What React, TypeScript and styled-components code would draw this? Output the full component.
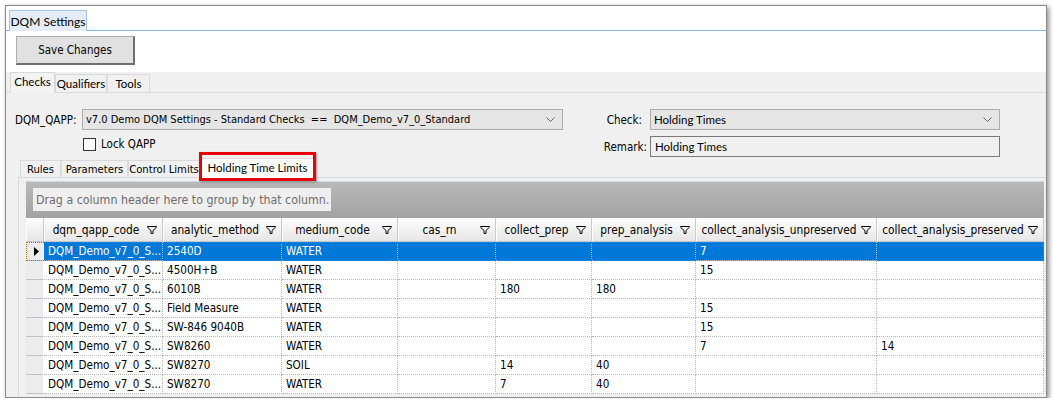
import React from "react";
import styled, { createGlobalStyle } from "styled-components";

const tahoma = `"DejaVu Sans Condensed", "DejaVu Sans", sans-serif`;
const segoe = `Lato, "Liberation Sans", sans-serif`;

const columns = [
  { key: "dqm_qapp_code", width: 119 },
  { key: "analytic_method", width: 119 },
  { key: "medium_code", width: 116 },
  { key: "cas_rn", width: 98 },
  { key: "collect_prep", width: 96 },
  { key: "prep_analysis", width: 104 },
  { key: "collect_analysis_unpreserved", width: 181 },
  { key: "collect_analysis_preserved", width: 167 },
];

const rows = [
  ["DQM_Demo_v7_0_S...", "2540D", "WATER", "", "", "", "7", ""],
  ["DQM_Demo_v7_0_S...", "4500H+B", "WATER", "", "", "", "15", ""],
  ["DQM_Demo_v7_0_S...", "6010B", "WATER", "", "180", "180", "", ""],
  ["DQM_Demo_v7_0_S...", "Field Measure", "WATER", "", "", "", "15", ""],
  ["DQM_Demo_v7_0_S...", "SW-846 9040B", "WATER", "", "", "", "15", ""],
  ["DQM_Demo_v7_0_S...", "SW8260", "WATER", "", "", "", "7", "14"],
  ["DQM_Demo_v7_0_S...", "SW8270", "SOIL", "", "14", "40", "", ""],
  ["DQM_Demo_v7_0_S...", "SW8270", "WATER", "", "7", "40", "", ""],
];

const subTabs = [
  { label: "Rules", width: 41 },
  { label: "Parameters", width: 67 },
  { label: "Control Limits", width: 72 },
  { label: "Holding Time Limits", width: 115, active: true },
];

function Chevron() {
  return (
    <svg width="9" height="5" viewBox="0 0 9 5">
      <path d="M0.5 0.5 L4.5 4.5 L8.5 0.5" fill="none" stroke="#606060" strokeWidth="1" />
    </svg>
  );
}

function Funnel() {
  return (
    <svg width="10" height="8" viewBox="0 0 10 8">
      <path
        d="M0.5 0.5 H9.5 V1.2 L6 4.5 V7.5 H4 V4.5 L0.5 1.2 Z"
        fill="none"
        stroke="#000"
        strokeWidth="1"
      />
    </svg>
  );
}

function App() {
  return (
    <>
      <GlobalStyle />
      <Window>
        <DocTabs>
          <DocTab>DQM Settings</DocTab>
        </DocTabs>
        <Toolbar>
          <Button>Save Changes</Button>
        </Toolbar>
        <MainTabs>
          <MainTab $w={45} $active>
            Checks
          </MainTab>
          <MainTab $w={52}>Qualifiers</MainTab>
          <MainTab $w={43}>Tools</MainTab>
        </MainTabs>
        <Page>
          <Form>
            <Label>DQM_QAPP:</Label>
            <Combo>
              <ComboText>v7.0 Demo DQM Settings - Standard Checks&nbsp;&nbsp;==&nbsp;&nbsp;DQM_Demo_v7_0_Standard</ComboText>
              <Chevron />
            </Combo>
            <RightLabel $pad={8}>Check:</RightLabel>
            <Combo $segoe>
              <ComboText>Holding Times</ComboText>
              <Chevron />
            </Combo>
            <span />
            <LockRow>
              <Checkbox />
              Lock QAPP
            </LockRow>
            <RightLabel $pad={3}>Remark:</RightLabel>
            <TextField>Holding Times</TextField>
          </Form>
          <SubTabArea>
            <SubTabStrip>
              {subTabs.map((t) => (
                <SubTab key={t.label} $w={t.width} $active={!!t.active}>
                  {t.label}
                  {t.active && <Highlight />}
                </SubTab>
              ))}
            </SubTabStrip>
            <SubPage>
              <Grid>
                <GroupPanel>
                  <GroupHint>Drag a column header here to group by that column.</GroupHint>
                </GroupPanel>
                <HeaderRow>
                  <HeaderCell $w={18} />
                  {columns.map((c) => (
                    <HeaderCell key={c.key} $w={c.width}>
                      <HeaderText>{c.key}</HeaderText>
                      <Funnel />
                    </HeaderCell>
                  ))}
                </HeaderRow>
                {rows.map((r, i) => (
                  <Row key={i} $selected={i === 0}>
                    <Indicator>
                      {i === 0 && (
                        <svg width="5" height="9" viewBox="0 0 5 9">
                          <polygon points="0,0 5,4.5 0,9" fill="#000" />
                        </svg>
                      )}
                    </Indicator>
                    {r.map((v, j) => (
                      <Cell key={j} $w={columns[j].width} $selected={i === 0}>
                        {v}
                      </Cell>
                    ))}
                  </Row>
                ))}
              </Grid>
            </SubPage>
          </SubTabArea>
        </Page>
      </Window>
    </>
  );
}

const GlobalStyle = createGlobalStyle`
  html, body {
    margin: 0;
    padding: 0;
    background: #fff;
  }
  body {
    font-family: ${tahoma};
    font-size: 11px;
    color: #000;
  }
  * {
    box-sizing: border-box;
  }
`;

const Window = styled("div")`
  margin: 5px 0 0 5px;
  width: 1042px;
  height: 393px;
  border: 1px solid #8a8a8a;
  box-shadow: 2px 2px 5px rgba(0, 0, 0, 0.45);
  background: #fff;
  overflow: hidden;
  display: flex;
  flex-direction: column;
`;

const DocTabs = styled("div")`
  display: flex;
  align-items: flex-end;
  height: 25px;
  padding-left: 3px;
  border-bottom: 1px solid #86b4e4;
`;

const DocTab = styled("div")`
  width: 78px;
  height: 21px;
  margin-bottom: -1px;
  background: #e4ecf7;
  border: 1px solid #a6c6ea;
  border-bottom: none;
  font-family: ${segoe};
  font-size: 12px;
  display: flex;
  align-items: center;
  justify-content: center;
`;

const Toolbar = styled("div")`
  height: 41px;
  padding: 5px 0 0 10px;
  background: #fff;
`;

const Button = styled("button")`
  width: 119px;
  height: 29px;
  background: #e1e1e1;
  border: 1px solid #adadad;
  border-right: 2px solid #6e6e6e;
  border-bottom: 2px solid #6e6e6e;
  font-family: ${tahoma};
  font-size: 11.5px;
  color: #000;
  padding: 0;
`;

const MainTabs = styled("div")`
  display: flex;
  align-items: flex-end;
  height: 21px;
  padding-left: 4px;
  background: #f0f0f0;
  border-bottom: 1px solid #d9d9d9;
`;

const MainTab = styled("div")<{ $w: number; $active?: boolean }>`
  width: ${(p) => p.$w}px;
  height: ${(p) => (p.$active ? 21 : 18)}px;
  margin-bottom: ${(p) => (p.$active ? -1 : 0)}px;
  background: ${(p) => (p.$active ? "#f3f3f3" : "#f0f0f0")};
  border: 1px solid #d9d9d9;
  border-bottom: none;
  font-family: ${segoe};
  font-size: 11.5px;
  display: flex;
  align-items: center;
  justify-content: center;
  padding-bottom: ${(p) => (p.$active ? 3 : 0)}px;
`;

const Page = styled("div")`
  flex: 1;
  background: #f0f0f0;
  padding: 16px 0 0 9px;
  display: flex;
  flex-direction: column;
`;

const Form = styled("div")`
  display: grid;
  grid-template-columns: 67px 481px 87px 350px;
  grid-template-rows: 21px 21px;
  row-gap: 6px;
  align-items: center;
`;

const Label = styled("div")`
  font-size: 11.5px;
`;

const RightLabel = styled("div")<{ $pad: number }>`
  text-align: right;
  padding-right: ${(p) => p.$pad}px;
  font-size: 11.5px;
`;

const Combo = styled("div")<{ $segoe?: boolean }>`
  height: 21px;
  background: #e5e5e5;
  border: 1px solid #acacac;
  display: flex;
  align-items: center;
  padding: 0 7px 0 3px;
  font-family: ${(p) => (p.$segoe ? segoe : tahoma)};
  font-size: ${(p) => (p.$segoe ? 11.5 : 11)}px;
`;

const ComboText = styled("div")`
  flex: 1;
  white-space: nowrap;
  overflow: hidden;
`;

const LockRow = styled("label")`
  align-self: start;
  display: flex;
  align-items: center;
  gap: 5px;
  padding: 1px 0 0 1px;
  font-size: 11.5px;
`;

const Checkbox = styled("span")`
  width: 13px;
  height: 13px;
  background: #fff;
  border: 1px solid #333;
`;

const TextField = styled("div")`
  height: 21px;
  background: #f0f0f0;
  border: 1px solid #7a7a7a;
  display: flex;
  align-items: center;
  padding-left: 4px;
  font-family: ${segoe};
  font-size: 11.5px;
`;

const SubTabArea = styled("div")`
  margin-left: 3px;
  flex: 1;
  display: flex;
  flex-direction: column;
`;

const SubTabStrip = styled("div")`
  display: flex;
  align-items: flex-end;
  height: 21px;
  padding-left: 2px;
  border-bottom: 1px solid #d9d9d9;
`;

const SubTab = styled("div")<{ $w: number; $active: boolean }>`
  position: relative;
  width: ${(p) => p.$w}px;
  height: ${(p) => (p.$active ? 20 : 17)}px;
  margin-bottom: ${(p) => (p.$active ? -1 : 0)}px;
  background: ${(p) => (p.$active ? "#fff" : "#f0f0f0")};
  border: 1px solid #d9d9d9;
  border-bottom: none;
  font-family: ${(p) => (p.$active ? segoe : tahoma)};
  font-size: ${(p) => (p.$active ? 11.5 : 11.2)}px;
  white-space: nowrap;
  display: flex;
  align-items: center;
  justify-content: center;
  padding-bottom: ${(p) => (p.$active ? 3 : 0)}px;
`;

const Highlight = styled("span")`
  position: absolute;
  left: -2px;
  top: -7px;
  width: 117px;
  height: 29px;
  border: 3px solid #e8000b;
  box-shadow: 1px 1px 2px rgba(0, 0, 0, 0.35);
`;

const SubPage = styled("div")`
  flex: 1;
  border-left: 1px solid #d9d9d9;
  padding: 3px 0 0 7px;
  background: #f0f0f0;
`;

const Grid = styled("div")`
  width: 1018px;
  border-top: 1px solid #c9d6e3;
  background: #fff;
`;

const GroupPanel = styled("div")`
  height: 36px;
  padding: 6px 0 0 7px;
  background: linear-gradient(#b9b9b9, #a2a2a2);
`;

const GroupHint = styled("div")`
  width: 298px;
  height: 23px;
  background: #efefef;
  color: #6d6d6d;
  font-size: 12.3px;
  display: flex;
  align-items: center;
  padding-left: 3px;
  white-space: nowrap;
`;

const HeaderRow = styled("div")`
  display: flex;
  height: 24px;
`;

const HeaderCell = styled("div")<{ $w: number }>`
  width: ${(p) => p.$w}px;
  display: flex;
  align-items: center;
  padding-right: 5px;
  background: linear-gradient(#fdfdfd, #e6e6e6);
  border-left: 1px solid #fff;
  border-right: 1px solid #cacaca;
  border-bottom: 1px solid #c4c4c4;
`;

const HeaderText = styled("span")`
  flex: 1;
  text-align: center;
  font-size: 11.8px;
  white-space: nowrap;
`;

const Row = styled("div")<{ $selected: boolean }>`
  display: flex;
  height: 19px;
  outline: ${(p) => (p.$selected ? "1px dotted #c26c00" : "none")};
  outline-offset: -1px;
`;

const Indicator = styled("div")`
  width: 18px;
  background: #ececec;
  border-right: 1px solid #fff;
  border-bottom: 1px solid #b7c5c8;
  display: flex;
  align-items: center;
  justify-content: center;
  padding-left: 3px;
`;

const Cell = styled("div")<{ $w: number; $selected: boolean }>`
  width: ${(p) => p.$w}px;
  padding-left: 4px;
  display: flex;
  align-items: center;
  white-space: nowrap;
  overflow: hidden;
  font-size: 11.6px;
  background: ${(p) => (p.$selected ? "#0078d7" : "#fff")};
  color: ${(p) => (p.$selected ? "#fff" : "#000")};
  border-right: 1px dotted ${(p) => (p.$selected ? "#9cc6ea" : "#b8b8b8")};
  border-bottom: 1px dotted #b8b8b8;
`;

export default App;
